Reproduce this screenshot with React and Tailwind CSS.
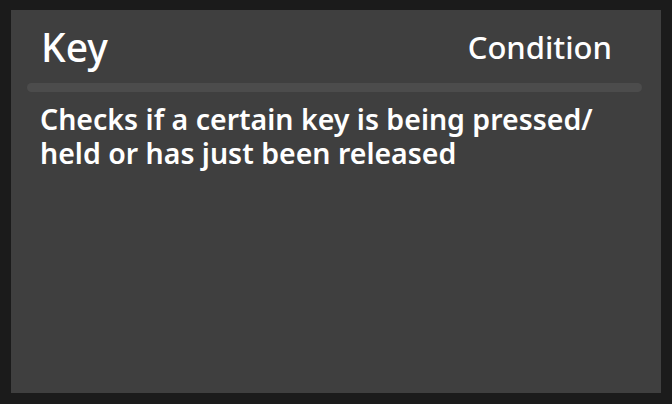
export default function App() {
  return (
    <div
      className="w-[672px] h-[404px] bg-[#1b1b1b] pt-[10px] pl-[11px] pr-[11px] pb-[11px]"
      style={{ fontFamily: '"Noto Sans", "Open Sans", sans-serif' }}
    >
      <div className="h-full bg-[#3f3f3f] pl-[16px] pr-[19px] pt-[12px] text-white">
        {/* Header */}
        <div className="flex items-start justify-between pl-[14px] pr-[30px] h-[61px]">
          <h1 className="text-[39px] leading-[50px] font-medium">Key</h1>
          <span className="text-[31px] leading-[50px] font-medium">Condition</span>
        </div>
        <div className="h-[9px] rounded-full bg-[#4c4c4c]" />
        <p className="mt-[10px] pl-[13px] text-[28.5px] leading-[34px] font-semibold">
          Checks if a certain key is being pressed/
          <br />
          held or has just been released
        </p>
      </div>
    </div>
  );
}
